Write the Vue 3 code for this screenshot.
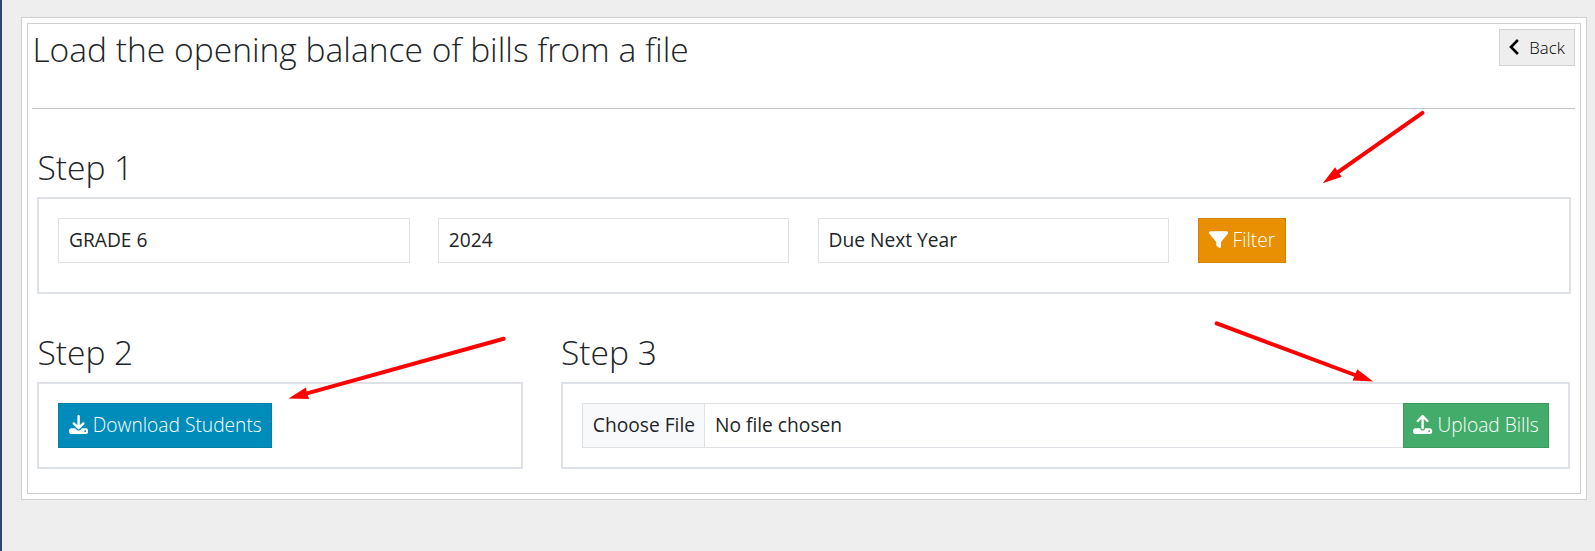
<script setup>
import { ref } from 'vue'

const filters = ref(['GRADE 6', '2024', 'Due Next Year'])

const arrows = [
  { from: [1422.5, 112.8], to: [1338, 172.2], head: '1322.8,183.3 1335.1,167.3 1338,172 1341.8,176.7' },
  { from: [503.7, 338.7], to: [307, 393.4], head: '288.5,398.6 306,387.6 307,393.4 309.2,399' },
  { from: [1216.7, 323.4], to: [1355, 375], head: '1373.2,381.6 1357.2,369.2 1355,375 1352.6,380.4' },
]
</script>

<template>
  <main class="page">
    <section class="panel">
      <div class="panel-inner">
        <header class="head">
          <h1 class="title">Load the opening balance of bills from a file</h1>
          <button class="back" type="button">
            <svg class="chevron" viewBox="0 0 10 16"><path d="M8.9 1 2 8l6.9 7" /></svg>
            <span>Back</span>
          </button>
        </header>

        <div class="step">
          <h2 class="title">Step 1</h2>
          <div class="box box-filter">
            <div v-for="f in filters" :key="f" class="field">{{ f }}</div>
            <button class="btn filter" type="button">
              <svg class="icon" viewBox="0 0 512 512"><path d="M3.9 54.9C10.5 40.9 24.5 32 40 32H472c15.5 0 29.5 8.9 36.1 22.9s4.6 30.5-5.2 42.5L320 320.9V448c0 12.1-6.8 23.2-17.7 28.6s-23.8 4.3-33.5-3l-64-48c-8.1-6-12.8-15.5-12.8-25.6V320.9L9 97.3C-.7 85.4-2.8 68.8 3.9 54.9z" /></svg>
              <span>Filter</span>
            </button>
          </div>
        </div>

        <div class="columns">
          <div class="step">
            <h2 class="title">Step 2</h2>
            <div class="box">
              <button class="btn download" type="button">
                <svg class="icon" viewBox="0 0 512 512"><path d="M288 32c0-17.7-14.3-32-32-32s-32 14.3-32 32V274.7l-73.4-73.4c-12.5-12.5-32.8-12.5-45.3 0s-12.5 32.8 0 45.3l128 128c12.5 12.5 32.8 12.5 45.3 0l128-128c12.5-12.5 12.5-32.8 0-45.3s-32.8-12.5-45.3 0L288 274.7V32zM64 352c-35.3 0-64 28.7-64 64v32c0 35.3 28.7 64 64 64H448c35.3 0 64-28.7 64-64V416c0-35.3-28.7-64-64-64H346.5l-45.3 45.3c-25 25-65.5 25-90.5 0L165.5 352H64zm368 56a24 24 0 1 1 0 48 24 24 0 1 1 0-48z" /></svg>
                <span>Download Students</span>
              </button>
            </div>
          </div>
          <div class="step upload-step">
            <h2 class="title">Step 3</h2>
            <div class="box">
              <div class="file">
                <span class="choose">Choose File</span>
                <span class="chosen">No file chosen</span>
              </div>
              <button class="btn upload" type="button">
                <svg class="icon" viewBox="0 0 512 512"><path d="M288 109.3V352c0 17.7-14.3 32-32 32s-32-14.3-32-32V109.3l-73.4 73.4c-12.5 12.5-32.8 12.5-45.3 0s-12.5-32.8 0-45.3l128-128c12.5-12.5 32.8-12.5 45.3 0l128 128c12.5 12.5 12.5 32.8 0 45.3s-32.8 12.5-45.3 0L288 109.3zM64 352H192c0 35.3 28.7 64 64 64s64-28.7 64-64H448c35.3 0 64 28.7 64 64v32c0 35.3-28.7 64-64 64H64c-35.3 0-64-28.7-64-64V416c0-35.3 28.7-64 64-64zM432 456a24 24 0 1 0 0-48 24 24 0 1 0 0 48z" /></svg>
                <span>Upload Bills</span>
              </button>
            </div>
          </div>
        </div>
      </div>
    </section>

    <svg class="arrows" viewBox="0 0 1595 551">
      <g v-for="(a, i) in arrows" :key="i">
        <line :x1="a.from[0]" :y1="a.from[1]" :x2="a.to[0]" :y2="a.to[1]" />
        <polygon :points="a.head" />
      </g>
    </svg>
  </main>
</template>

<style>
body {
  margin: 0;
  background: #eeeeee;
}
</style>

<style scoped>
.page,
.page * {
  box-sizing: border-box;
}
.page {
  position: relative;
  width: 1595px;
  height: 551px;
  padding: 17px 8px 0 19px;
  border-left: 2px solid #33456b;
  background: #eeeeee;
  color: #212529;
  font-family: "Open Sans", "Noto Sans", sans-serif;
  font-size: 19.2px;
  line-height: 1.5;
  overflow: hidden;
}
.panel {
  height: 483px;
  padding: 5px;
  border: 1px solid #d0d0d0;
  background: #fff;
}
.panel-inner {
  height: 471px;
  padding: 5px 5px 0 4px;
  border: 1px solid #d0d0d0;
}
.head {
  display: flex;
  justify-content: space-between;
  align-items: flex-start;
  height: 80px;
  padding-left: 0.4px;
  border-bottom: 1px solid #c6c6c6;
}
.title {
  margin: 0;
  height: 40px;
  font-size: 33.6px;
  font-weight: 300;
  line-height: 40px;
  white-space: nowrap;
}
.back {
  display: flex;
  align-items: center;
  width: 76px;
  height: 37px;
  padding: 0 0 0 9px;
  border: 1px solid #d3d3d3;
  background: #eeeeee;
  color: #000;
  font: 300 16.8px/25px "Open Sans", "Noto Sans", sans-serif;
}
.chevron {
  width: 10px;
  height: 16px;
  margin: -2px 10.8px 0 -0.5px;
  fill: none;
  stroke: #000;
  stroke-width: 2.6;
}
.step {
  min-width: 0;
}
.panel-inner > .step {
  margin: 38px 4px 0 5px;
}
.step .title {
  margin-bottom: 10px;
  padding-left: 0.4px;
}
.upload-step .title {
  padding-left: 0;
}
.box {
  display: flex;
  align-items: flex-start;
  height: 87px;
  padding: 19px;
  border: 2px solid #dee2e6;
}
.box-filter {
  height: 97px;
  padding-left: 19.4px;
  gap: 28.6px;
}
.field {
  width: 351.2px;
  height: 45px;
  padding: 6px 9.6px;
  border: 1px solid #dee2e6;
  line-height: 29px;
}
.columns {
  display: grid;
  grid-template-columns: 486px 1009px;
  gap: 38px;
  margin: 38px 0 0 5px;
}
.btn {
  display: flex;
  align-items: center;
  flex: none;
  gap: 4.8px;
  height: 45px;
  padding: 0 0 2px 9.8px;
  border: 1px solid;
  color: #fff;
  font: 300 19.2px/29px "Open Sans", "Noto Sans", sans-serif;
  white-space: nowrap;
}
.icon {
  width: 19.2px;
  height: 19.2px;
  fill: #fff;
}
.filter {
  width: 88px;
  border-color: #d18207;
  background: #e99002;
}
.download {
  width: 214px;
  border-color: #007ea8;
  background: #008cba;
}
.upload {
  width: 146px;
  padding-left: 9.4px;
  border-color: #3c9a5f;
  background: #43ac6a;
}
.file {
  display: flex;
  flex: 1;
  height: 45px;
  border: 1px solid #dee2e6;
  border-right: 0;
  line-height: 41px;
}
.choose {
  width: 122px;
  padding-left: 9.8px;
  border-right: 1px solid #dee2e6;
  background: #f8f9fa;
}
.chosen {
  padding-left: 10px;
}
.arrows {
  position: absolute;
  top: 0;
  left: -2px;
  width: 1595px;
  height: 551px;
  pointer-events: none;
}
.arrows line {
  stroke: #fe0000;
  stroke-width: 4;
  stroke-linecap: round;
}
.arrows polygon {
  fill: #fe0000;
}
</style>
